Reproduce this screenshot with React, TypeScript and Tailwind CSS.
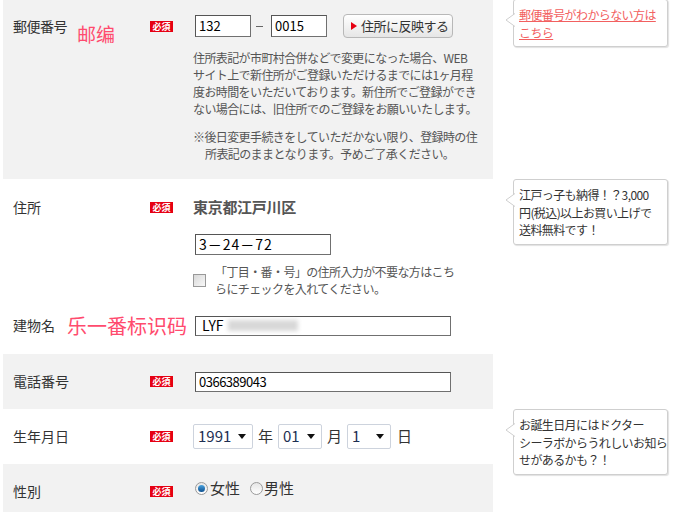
import type { ReactNode } from 'react';

const jp = "font-['Noto_Sans_CJK_JP','Noto_Sans',sans-serif]";

function Required() {
    return (
        <span className="inline-flex h-[11px] w-[23px] items-center justify-center bg-[#e60012] text-[9px] font-bold leading-none text-white">
            必須
        </span>
    );
}

function TextBox({ value, className }: { value: ReactNode; className: string }) {
    return (
        <div
            className={`flex items-center border border-[#707070] border-t-[#555] border-l-[#555] bg-white px-[3px] text-[13px] text-black ${className}`}
        >
            {value}
        </div>
    );
}

function Bubble({ children, top }: { children: ReactNode; top: string }) {
    return (
        <div
            className={`absolute left-[20px] w-[155px] whitespace-nowrap rounded-[3px] border border-[#cfcfcf] bg-white px-[5px] pt-[6px] pb-[5px] text-[12px] leading-[17.5px] tracking-[-0.6px] text-[#333] shadow-[1px_1px_1px_rgba(0,0,0,0.12)] ${top}`}
        >
            <svg className="absolute left-[-9px] top-[13px]" width="10" height="14" viewBox="0 0 10 14">
                <path d="M10 0.5 L1 7 L10 13.5" fill="white" stroke="#cfcfcf" strokeWidth="1" />
            </svg>
            {children}
        </div>
    );
}

function Select({ value, w }: { value: string; w: string }) {
    return (
        <div
            className={`flex h-[25px] items-center justify-between rounded-[2px] border border-[#cdd3dd] bg-white pl-[4px] pr-[6px] text-[15px] text-[#1d2f52] ${w}`}
        >
            <span>{value}</span>
            <svg width="8" height="5" viewBox="0 0 8 5">
                <path d="M0 0 L8 0 L4 5 Z" fill="#111" />
            </svg>
        </div>
    );
}

function Radio({ checked }: { checked?: boolean }) {
    return (
        <span className="flex h-[13px] w-[13px] items-center justify-center rounded-full border border-[#9a9a9a] bg-gradient-to-b from-[#e6e6e6] to-white">
            {checked && <span className="h-[7px] w-[7px] rounded-full bg-gradient-to-b from-[#4aa3df] to-[#0b4f8f]" />}
        </span>
    );
}

export default function App() {
    return (
        <div className={`min-h-screen w-[683px] overflow-hidden bg-white text-[#333] ${jp}`}>
            {/* 郵便番号 */}
            <div className="flex">
                <div className="relative ml-[3px] flex w-[490px] bg-[#f2f2f2] pt-[14px] pb-[17px]">
                    <div className="flex h-[24px] w-[147px] items-center pl-[10px] text-[14px] tracking-[-0.5px]">郵便番号</div>
                    <div className="flex h-[24px] w-[43px] items-center">
                        <Required />
                    </div>
                    <div>
                        <div className="flex h-[24px] items-center">
                            <TextBox value="132" className="ml-[2px] h-[22px] w-[56px]" />
                            <span className="ml-[5px] mr-[8px] h-px w-[7px] bg-[#666]" />
                            <TextBox value="0015" className="h-[22px] w-[56px] text-[12px]" />
                            <button className="ml-[16px] flex h-[24px] w-[110px] items-center gap-[4px] rounded-[4px] border border-[#b8b8b8] bg-gradient-to-b from-white to-[#e6e6e6] pl-[7px] text-[13px] tracking-[-0.5px] text-[#333]">
                                <svg width="6" height="8" viewBox="0 0 6 8">
                                    <path d="M0 0 L6 4 L0 8 Z" fill="#e60012" />
                                </svg>
                                住所に反映する
                            </button>
                        </div>
                        <p className="mt-[11px] whitespace-nowrap text-[12px] leading-[17px] tracking-[-0.6px] text-[#555]">
                            住所表記が市町村合併などで変更になった場合、WEB
                            <br />
                            サイト上で新住所がご登録いただけるまでには1ヶ月程
                            <br />
                            度お時間をいただいております。新住所でご登録ができ
                            <br />
                            ない場合には、旧住所でのご登録をお願いいたします。
                        </p>
                        <p className="mt-[11px] whitespace-nowrap pl-[12px] -indent-[12px] text-[12px] leading-[17px] tracking-[-0.6px] text-[#555]">
                            ※後日変更手続きをしていただかない限り、登録時の住
                            <br />
                            所表記のままとなります。予めご了承ください。
                        </p>
                    </div>
                    <span className="absolute left-[74px] top-[24px] text-[19px] leading-none text-[#ff4b6e]">邮编</span>
                </div>
                <div className="relative flex-1">
                    <Bubble top="-top-px">
                        <a className="text-[#f26060] underline">
                            郵便番号がわからない方は
                            <br />
                            こちら
                        </a>
                    </Bubble>
                </div>
            </div>

            {/* 住所 */}
            <div className="flex">
                <div className="ml-[3px] w-[490px] bg-white">
                    <div className="flex pt-[18px]">
                        <div className="flex h-[20px] w-[147px] items-center pl-[10px] text-[14px]">住所</div>
                        <div className="flex h-[20px] w-[43px] items-center">
                            <Required />
                        </div>
                        <div>
                            <div className="h-[20px] text-[15px] font-bold leading-[20px] tracking-[-0.3px] text-[#555]">東京都江戸川区</div>
                            <TextBox value="3－24－72" className="ml-[2px] mt-[17px] h-[21px] w-[136px] text-[14px] tracking-[1px]" />
                            <div className="mt-[8px] flex items-center">
                                <span className="h-[13px] w-[13px] border border-[#999] bg-gradient-to-br from-[#d9d9d9] to-[#f8f8f8]" />
                                <p className="ml-[9px] whitespace-nowrap text-[12px] leading-[17px] tracking-[-0.6px] text-[#555]">
                                    「丁目・番・号」の住所入力が不要な方はこち
                                    <br />
                                    らにチェックを入れてください。
                                </p>
                            </div>
                        </div>
                    </div>
                    <div className="relative flex items-center pt-[18px] pb-[18px]">
                        <div className="w-[190px] pl-[10px] text-[14px]">建物名</div>
                        <TextBox
                            value={
                                <>
                                    <span className="text-[14px]">LYF</span>
                                    <span className="ml-[4px] h-[11px] w-[70px] bg-[#d8d8d8] blur-[2px]" />
                                </>
                            }
                            className="ml-[2px] h-[20px] w-[256px] pl-[6px]"
                        />
                        <span className="absolute left-[64px] top-[19px] text-[20px] leading-none text-[#ff4b6e]">乐一番标识码</span>
                    </div>
                </div>
                <div className="relative flex-1">
                    <Bubble top="top-0">
                        江戸っ子も納得！？3,000
                        <br />
                        円(税込)以上お買い上げで
                        <br />
                        送料無料です！
                    </Bubble>
                </div>
            </div>

            {/* 電話番号 */}
            <div className="flex">
                <div className="ml-[3px] flex h-[55px] w-[490px] items-center bg-[#f2f2f2]">
                    <div className="w-[147px] pl-[10px] text-[14px]">電話番号</div>
                    <div className="flex w-[43px] items-center">
                        <Required />
                    </div>
                    <TextBox value="0366389043" className="ml-[2px] h-[20px] w-[256px] text-[12px] tracking-[-0.5px]" />
                </div>
                <div className="flex-1" />
            </div>

            {/* 生年月日 */}
            <div className="flex">
                <div className="ml-[3px] flex h-[55px] w-[490px] items-center bg-white">
                    <div className="w-[147px] pl-[10px] text-[14px]">生年月日</div>
                    <div className="flex w-[43px] items-center">
                        <Required />
                    </div>
                    <div className="flex items-center text-[15px] text-[#333]">
                        <Select value="1991" w="w-[60px]" />
                        <span className="mx-[5px]">年</span>
                        <Select value="01" w="w-[44px]" />
                        <span className="mx-[5px]">月</span>
                        <Select value="1" w="w-[44px]" />
                        <span className="ml-[6px]">日</span>
                    </div>
                </div>
                <div className="relative flex-1">
                    <Bubble top="top-0">
                        お誕生日月にはドクター
                        <br />
                        シーラボからうれしいお知ら
                        <br />
                        せがあるかも？！
                    </Bubble>
                </div>
            </div>

            {/* 性別 */}
            <div className="flex">
                <div className="ml-[3px] flex h-[55px] w-[490px] items-center bg-[#f2f2f2]">
                    <div className="w-[147px] pl-[10px] text-[14px]">性別</div>
                    <div className="flex w-[43px] items-center">
                        <Required />
                    </div>
                    <div className="-mt-[7px] ml-[2px] flex items-center text-[15px] text-[#333]">
                        <Radio checked />
                        <span className="ml-[2px]">女性</span>
                        <span className="ml-[10px]">
                            <Radio />
                        </span>
                        <span className="ml-[1px]">男性</span>
                    </div>
                </div>
                <div className="flex-1" />
            </div>
        </div>
    );
}
